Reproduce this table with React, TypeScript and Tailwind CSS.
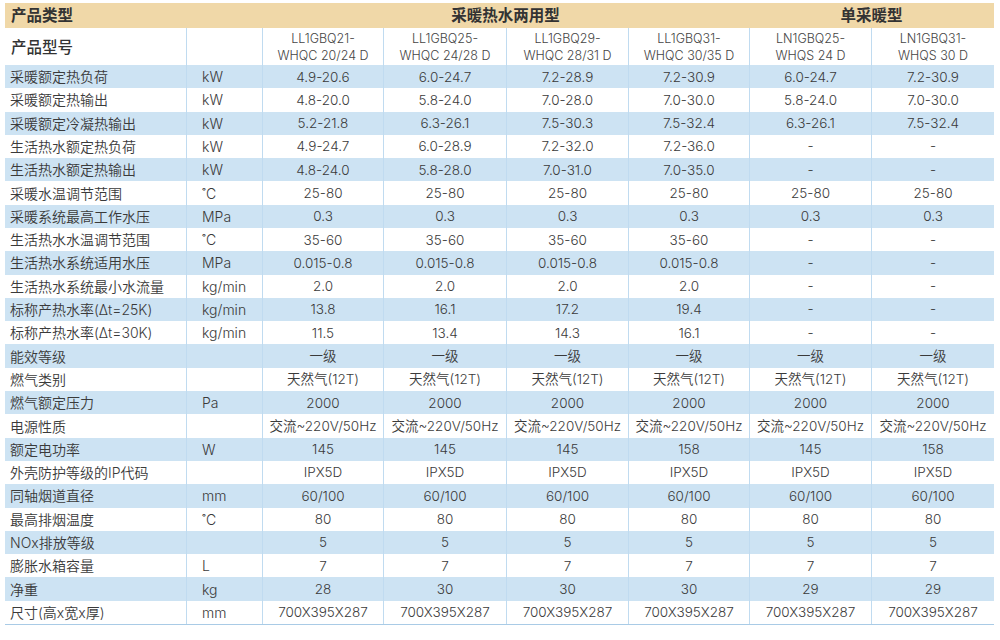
const models: [string, string][] = [
  ['LL1GBQ21-', 'WHQC 20/24 D'],
  ['LL1GBQ25-', 'WHQC 24/28 D'],
  ['LL1GBQ29-', 'WHQC 28/31 D'],
  ['LL1GBQ31-', 'WHQC 30/35 D'],
  ['LN1GBQ25-', 'WHQS 24 D'],
  ['LN1GBQ31-', 'WHQS 30 D'],
];

const six = (v: string) => [v, v, v, v, v, v];
const four = (v: string) => [v, v, v, v, '-', '-'];

const rows: [string, string, string[]][] = [
  ['采暖额定热负荷', 'kW', ['4.9-20.6', '6.0-24.7', '7.2-28.9', '7.2-30.9', '6.0-24.7', '7.2-30.9']],
  ['采暖额定热输出', 'kW', ['4.8-20.0', '5.8-24.0', '7.0-28.0', '7.0-30.0', '5.8-24.0', '7.0-30.0']],
  ['采暖额定冷凝热输出', 'kW', ['5.2-21.8', '6.3-26.1', '7.5-30.3', '7.5-32.4', '6.3-26.1', '7.5-32.4']],
  ['生活热水额定热负荷', 'kW', ['4.9-24.7', '6.0-28.9', '7.2-32.0', '7.2-36.0', '-', '-']],
  ['生活热水额定热输出', 'kW', ['4.8-24.0', '5.8-28.0', '7.0-31.0', '7.0-35.0', '-', '-']],
  ['采暖水温调节范围', '˚C', six('25-80')],
  ['采暖系统最高工作水压', 'MPa', six('0.3')],
  ['生活热水水温调节范围', '˚C', four('35-60')],
  ['生活热水系统适用水压', 'MPa', four('0.015-0.8')],
  ['生活热水系统最小水流量', 'kg/min', four('2.0')],
  ['标称产热水率(Δt=25K)', 'kg/min', ['13.8', '16.1', '17.2', '19.4', '-', '-']],
  ['标称产热水率(Δt=30K)', 'kg/min', ['11.5', '13.4', '14.3', '16.1', '-', '-']],
  ['能效等级', '', six('一级')],
  ['燃气类别', '', six('天然气(12T)')],
  ['燃气额定压力', 'Pa', six('2000')],
  ['电源性质', '', six('交流~220V/50Hz')],
  ['额定电功率', 'W', ['145', '145', '145', '158', '145', '158']],
  ['外壳防护等级的IP代码', '', six('IPX5D')],
  ['同轴烟道直径', 'mm', six('60/100')],
  ['最高排烟温度', '˚C', six('80')],
  ['NOx排放等级', '', six('5')],
  ['膨胀水箱容量', 'L', six('7')],
  ['净重', 'kg', ['28', '30', '30', '30', '29', '29']],
  ['尺寸(高x宽x厚)', 'mm', six('700X395X287')],
];

const cols = 'grid grid-cols-[181px_76px_121px_123px_122px_121px_122px_123px]';
const line = 'border-l border-[#c0dbf0]';

export default function App() {
  return (
    <div
      className="w-[1000px] h-[640px] bg-white pt-[3px] pl-[5px] text-[#3a3a3a]"
      style={{ fontFamily: 'Inter, "Noto Sans CJK SC", sans-serif' }}
    >
      <div className="w-[989px]">
        {/* 产品类型 */}
        <div className={`${cols} h-[25px] bg-[#f0d8a8] items-center font-bold text-[15.5px] text-[#333]`}>
          <div className="pl-[6px] col-span-2">产品类型</div>
          <div className="col-span-4 text-center">采暖热水两用型</div>
          <div className="col-span-2 text-center">单采暖型</div>
        </div>

        {/* 产品型号 */}
        <div className={`${cols} h-[37px]`}>
          <div className="pl-[6px] pt-[2px] flex items-center text-[15.5px] font-medium text-[#333]">产品型号</div>
          <div className={line} />
          {models.map(([a, b]) => (
            <div
              key={a + b}
              className={`${line} flex flex-col items-center justify-center text-[12.5px] leading-[17px] font-[350] text-[#444]`}
            >
              <span>{a}</span>
              <span>{b}</span>
            </div>
          ))}
        </div>

        {/* 参数 */}
        <div className="grid grid-rows-[repeat(24,1fr)] h-[560px] border-b border-[#a9cbe6] font-[350]">
          {rows.map(([label, unit, vals], i) => (
            <div key={label} className={`${cols} text-[14px] ${i % 2 === 0 ? 'bg-[#cde3f3]' : 'bg-white'}`}>
              <div className="pl-[5px] flex items-center whitespace-nowrap">{label}</div>
              <div className={`${line} pl-[15px] flex items-center`}>{unit}</div>
              {vals.map((v, j) => (
                <div key={j} className={`${line} flex items-center justify-center whitespace-nowrap text-[13.5px]`}>
                  {v}
                </div>
              ))}
            </div>
          ))}
        </div>
      </div>
    </div>
  );
}
